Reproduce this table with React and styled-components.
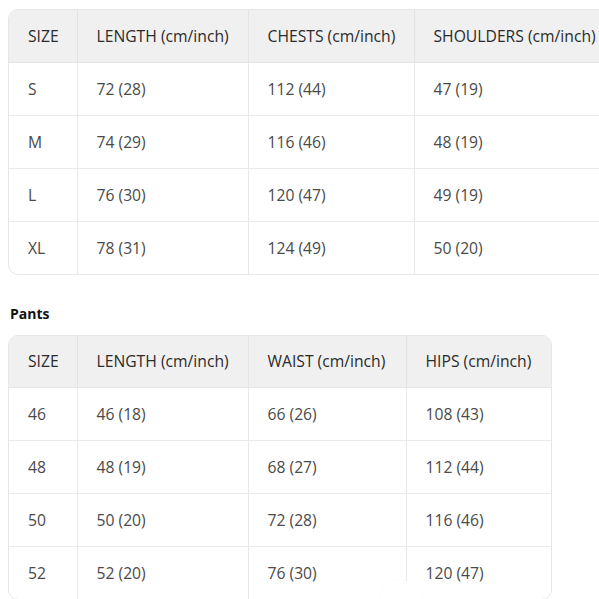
import React from "react";
import styled, { createGlobalStyle } from "styled-components";

const GlobalStyle = createGlobalStyle`
  html, body {
    margin: 0;
    padding: 0;
    background: #fff;
    overflow: hidden;
  }
  body {
    font-family: "Open Sans", "Noto Sans", sans-serif;
    color: #444;
  }
`;

const Page = styled.div`
  padding: 9px 0 0 8px;
  display: flex;
  flex-direction: column;
  align-items: flex-start;
  width: 800px;
`;

const TableWrap = styled.div`
  border: 1px solid #e6e6e6;
  border-radius: 10px;
  overflow: hidden;
  display: inline-block;
`;

const Table = styled.table`
  border-collapse: collapse;
  border-spacing: 0;
  font-size: 15.7px;
`;

const Th = styled.th`
  background: #f0f0f0;
  color: #2b2b2b;
  font-weight: 400;
  text-align: left;
  height: 52px;
  padding: 0 0 0 19px;
  white-space: nowrap;
  width: ${({ $w }) => $w}px;
  box-sizing: border-box;
  border-left: 1px solid #e4e4e4;
  border-bottom: 1px solid #e4e4e4;
  &:first-child {
    border-left: none;
  }
`;

const Td = styled.td`
  color: #4a4a4a;
  height: 52px;
  padding: 0 0 0 19px;
  white-space: nowrap;
  border-left: 1px solid #e9e9e9;
  border-top: 1px solid #e9e9e9;
  &:first-child {
    border-left: none;
  }
`;

const Heading = styled.h3`
  margin: 29px 0 12px 2px;
  font-size: 14px;
  font-weight: 700;
  color: #111;
`;

const Fab = styled.div`
  position: fixed;
  left: 379px;
  top: 580px;
  width: 44px;
  height: 44px;
  border-radius: 50%;
  background: #fff;
  box-shadow: 0 0 3px rgba(0, 0, 0, 0.03);
`;

const tops = {
  widths: [68, 171, 166, 200],
  head: ["SIZE", "LENGTH (cm/inch)", "CHESTS (cm/inch)", "SHOULDERS (cm/inch)"],
  rows: [
    ["S", "72 (28)", "112 (44)", "47 (19)"],
    ["M", "74 (29)", "116 (46)", "48 (19)"],
    ["L", "76 (30)", "120 (47)", "49 (19)"],
    ["XL", "78 (31)", "124 (49)", "50 (20)"],
  ],
};

const pants = {
  widths: [68, 171, 158, 145],
  head: ["SIZE", "LENGTH (cm/inch)", "WAIST (cm/inch)", "HIPS (cm/inch)"],
  rows: [
    ["46", "46 (18)", "66 (26)", "108 (43)"],
    ["48", "48 (19)", "68 (27)", "112 (44)"],
    ["50", "50 (20)", "72 (28)", "116 (46)"],
    ["52", "52 (20)", "76 (30)", "120 (47)"],
  ],
};

const SizeTable = ({ data }) => (
  <TableWrap>
    <Table>
      <thead>
        <tr>
          {data.head.map((h, i) => (
            <Th key={h} $w={data.widths[i]}>{h}</Th>
          ))}
        </tr>
      </thead>
      <tbody>
        {data.rows.map((row) => (
          <tr key={row[0]}>
            {row.map((c, i) => (
              <Td key={i}>{c}</Td>
            ))}
          </tr>
        ))}
      </tbody>
    </Table>
  </TableWrap>
);

export default function App() {
  return (
    <>
      <GlobalStyle />
      <Page>
        <SizeTable data={tops} />
        <Heading>Pants</Heading>
        <SizeTable data={pants} />
      </Page>
      <Fab />
    </>
  );
}
